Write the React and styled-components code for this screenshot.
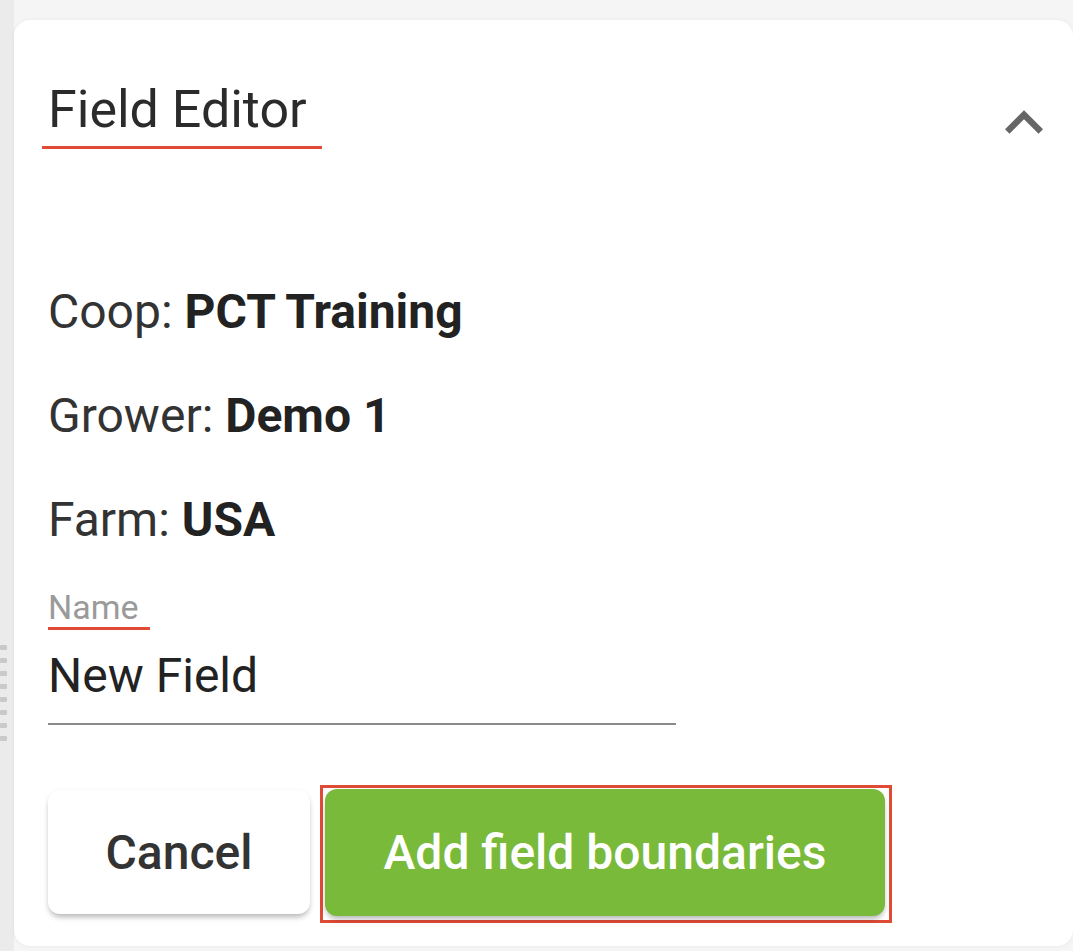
import React from "react";
import styled, { createGlobalStyle } from "styled-components";

const Global = createGlobalStyle`
  html, body { margin: 0; padding: 0; }
  body {
    background: #f5f5f5;
    font-family: Roboto, "Liberation Sans", Arial, sans-serif;
    color: #333;
  }
  * { box-sizing: border-box; }
`;

const Page = styled.div`
  display: flex;
  height: 951px;
  overflow: hidden;
`;

const Rail = styled.div`
  width: 14px;
  flex: none;
  background: #ebebeb;
  padding-top: 645px;
  display: flex;
  flex-direction: column;
  gap: 8px;
`;

const GripDot = styled.span`
  display: block;
  width: 7px;
  height: 5px;
  border-radius: 1px;
  background: #c9c9c9;
`;

const Main = styled.div`
  flex: 1;
  padding: 20px 0 5px 0;
  display: flex;
`;

const Card = styled.section`
  flex: 1;
  background: #fff;
  border-radius: 16px;
  box-shadow: 0 0 4px rgba(0, 0, 0, 0.06);
  padding: 64px 11px 0 34px;
  display: flex;
  flex-direction: column;
`;

const Header = styled.header`
  display: flex;
  justify-content: space-between;
  align-items: flex-start;
`;

const Title = styled.h2`
  margin: 0 0 0 -6px;
  padding: 0 15px 10px 6px;
  font-size: 52px;
  line-height: 52px;
  font-weight: 400;
  color: #2b2b2b;
  border-bottom: 3px solid #e04b36;
`;

const Toggle = styled.svg`
  width: 76px;
  height: 76px;
  margin-top: 1px;
  margin-bottom: -14px;
  fill: #666;
`;

const InfoList = styled.div`
  margin-top: 135px;
  display: flex;
  flex-direction: column;
  gap: 48px;
`;

const InfoRow = styled.div`
  font-size: 48px;
  line-height: 56px;
  color: #333;
  white-space: nowrap;
`;

const InfoValue = styled.strong`
  font-weight: 700;
  color: #222;
`;

const FieldLabel = styled.label`
  align-self: flex-start;
  margin-top: 40px;
  padding-right: 11px;
  font-size: 34px;
  line-height: 39px;
  color: #9a9a9a;
  border-bottom: 3px solid #e04b36;
`;

const FieldValue = styled.div`
  margin-top: 18px;
  width: 628px;
  padding-bottom: 19px;
  font-size: 48px;
  line-height: 56px;
  color: #222;
  border-bottom: 2px solid #8a8a8a;
`;

const Actions = styled.div`
  margin-top: 60px;
  display: flex;
  align-items: flex-start;
  gap: 10px;
`;

const Button = styled.button`
  font-family: Roboto, "Liberation Sans", Arial, sans-serif;
  font-size: 48px;
  font-weight: 500;
  border: none;
  border-radius: 12px;
  display: flex;
  align-items: center;
  justify-content: center;
  cursor: pointer;
  width: ${(p) => p.$w}px;
  height: ${(p) => p.$h}px;
  margin-top: ${(p) => p.$mt || 0}px;
  background: ${(p) => (p.$primary ? "#7aba3a" : "#fff")};
  color: ${(p) => (p.$primary ? "#fff" : "#333")};
  box-shadow: 0 5px 6px -2px rgba(0, 0, 0, 0.22), 0 2px 5px rgba(0, 0, 0, 0.1);
`;

const Highlight = styled.div`
  border: 3px solid #e04b36;
  padding: 1px 4px 4px 2px;
`;

export default function App() {
  return (
    <>
      <Global />
      <Page>
        <Rail>
          {Array.from({ length: 8 }).map((_, i) => (
            <GripDot key={i} />
          ))}
        </Rail>
        <Main>
          <Card>
            <Header>
              <Title>Field Editor</Title>
              <Toggle viewBox="0 0 24 24" aria-label="collapse">
                <path d="M12 8l-6 6 1.41 1.41L12 10.83l4.59 4.58L18 14z" />
              </Toggle>
            </Header>
            <InfoList>
              <InfoRow>
                Coop: <InfoValue>PCT Training</InfoValue>
              </InfoRow>
              <InfoRow>
                Grower: <InfoValue>Demo 1</InfoValue>
              </InfoRow>
              <InfoRow>
                Farm: <InfoValue>USA</InfoValue>
              </InfoRow>
            </InfoList>
            <FieldLabel>Name</FieldLabel>
            <FieldValue>New Field</FieldValue>
            <Actions>
              <Button $w={262} $h={124} $mt={5}>
                Cancel
              </Button>
              <Highlight>
                <Button $primary $w={560} $h={127}>
                  Add field boundaries
                </Button>
              </Highlight>
            </Actions>
          </Card>
        </Main>
      </Page>
    </>
  );
}
